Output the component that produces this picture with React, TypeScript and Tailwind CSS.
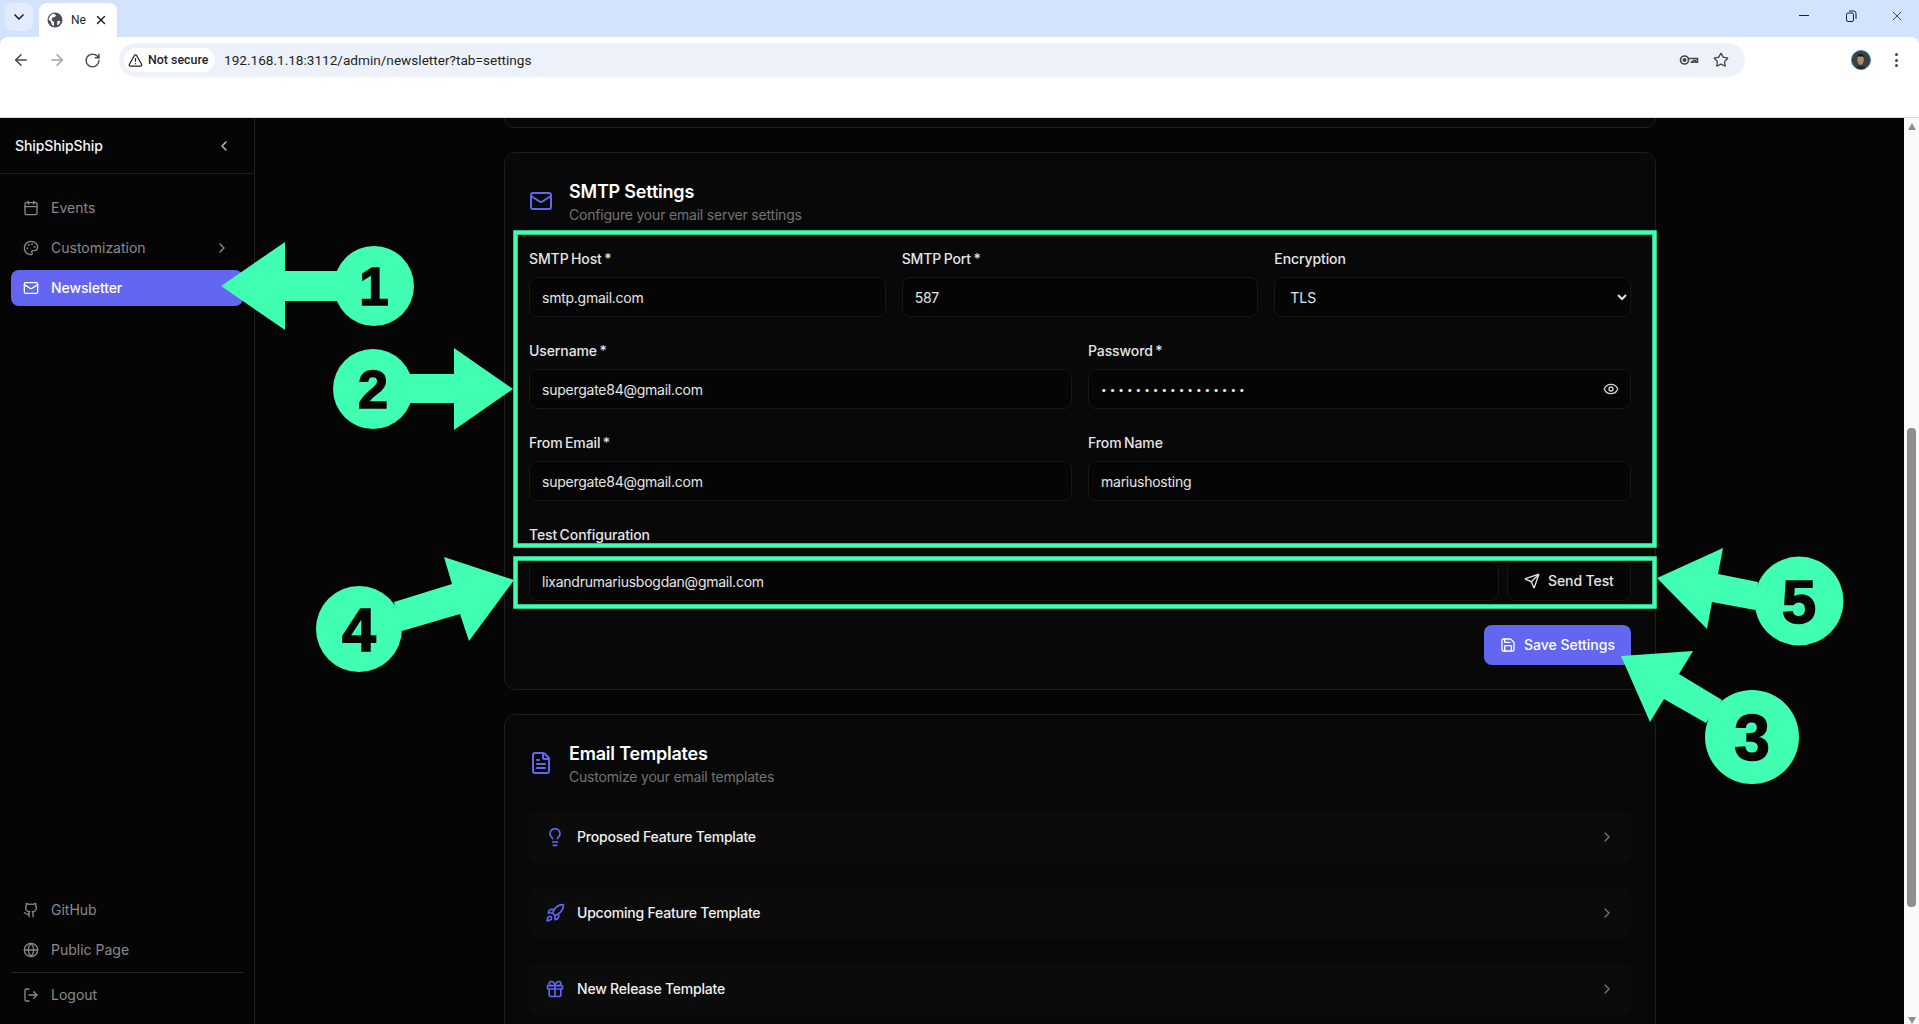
import {
  ArrowLeft,
  ArrowRight,
  Calendar,
  ChevronDown,
  ChevronLeft,
  ChevronRight,
  Eye,
  FileText,
  Gift,
  Github,
  Globe,
  Lightbulb,
  LogOut,
  Mail,
  Palette,
  RotateCw,
  Rocket,
  Save,
  Send,
  Star,
  TriangleAlert,
  X,
} from "lucide-react";

const inputClass =
  "w-full h-10 rounded-lg border border-[#171717] bg-[#050505] px-3 text-sm tracking-[-0.25px] text-[#e5e5e5] outline-none";

const labelClass = "block text-sm font-medium leading-5 tracking-[-0.1px] [word-spacing:-1.2px] text-[#e5e5e5]";

function Field({ label, value, type = "text" }: { label: string; value: string; type?: string }) {
  return (
    <div>
      <label className={labelClass + " mb-2"}>{label}</label>
      <input readOnly type={type} value={value} className={inputClass} />
    </div>
  );
}

function BrowserChrome() {
  return (
    <div className="h-[118px] shrink-0 bg-[#d3e3fd] font-['Roboto',sans-serif]">
      {/* Tab strip */}
      <div className="flex h-[37px] items-end pl-[5px]">
        <div className="mb-[6px] flex h-[28px] w-[28px] items-center justify-center rounded-lg bg-[#e3ecfc]">
          <ChevronDown className="h-4 w-4 text-[#1f1f1f]" strokeWidth={2.5} />
        </div>
        <div className="ml-[6px] flex h-[34px] w-[78px] items-center rounded-t-lg bg-white pl-[8px]">
          <svg viewBox="0 0 16 16" className="h-[16px] w-[16px] shrink-0">
            <circle cx="8" cy="8" r="7.5" fill="#4a4d51" />
            <path d="M6 1.5 9 3 8 5 5.5 5.5 4.5 8 7 10 7 14 5 13 3.5 9 1.5 7.5 3 4Z" fill="#fff" />
            <path d="M10.5 9h3l-1.5 3.5-2 .5Z" fill="#fff" />
          </svg>
          <span className="ml-[8px] w-[14px] whitespace-nowrap text-xs text-[#1f1f1f]">Ne</span>
          <X className="ml-[9px] h-[14px] w-[14px] text-[#1f1f1f]" strokeWidth={2.5} />
        </div>
        <div className="ml-auto flex h-full w-[136px] items-start pt-[8px] text-[#1f1f1f]">
          <div className="flex w-[46px] justify-center pr-[4px] pt-[7px]">
            <div className="h-[1px] w-[10px] bg-[#1f1f1f]" />
          </div>
          <div className="flex w-[46px] justify-center pr-[2px] pt-[2px]">
            <svg viewBox="0 0 12 12" className="h-[12px] w-[12px]" fill="none" stroke="#1f1f1f">
              <rect x="1.5" y="3" width="7" height="8.5" rx="1.5" />
              <path d="M4 1h4.5A2.5 2.5 0 0 1 11 3.5V9" />
            </svg>
          </div>
          <div className="flex w-[44px] justify-center">
            <X className="h-[16px] w-[16px]" strokeWidth={1.2} />
          </div>
        </div>
      </div>
      {/* Toolbar */}
      <div className="flex h-[81px] flex-col rounded-t-lg border-b border-[#d9d9d9] bg-white">
        <div className="flex h-[46px] items-center">
          <div className="flex w-[119px] items-center pl-[12px] text-[#444746]">
            <ArrowLeft className="h-[18px] w-[18px]" />
            <ArrowRight className="ml-[18px] h-[18px] w-[18px] text-[#a0a3a6]" />
            <RotateCw className="ml-[18px] h-[17px] w-[17px]" />
          </div>
          <div className="flex h-[34px] w-[1626px] items-center rounded-full bg-[#edf2fa] pl-[5px] pr-[16px]">
            <div className="flex h-[24px] w-[91px] items-center rounded-full bg-white pl-[4px] text-[12.4px] font-medium text-[#1f1f1f]">
              <TriangleAlert className="h-[15px] w-[15px]" />
              <span className="ml-[5px] whitespace-nowrap">Not secure</span>
            </div>
            <span className="ml-[9px] text-[13.6px] text-[#1f1f1f]">192.168.1.18:3112/admin/newsletter?tab=settings</span>
            <svg viewBox="0 0 20 12" className="ml-auto mr-[-1px] h-[12px] w-[20px]" fill="none" stroke="#444746" strokeWidth="1.6">
              <circle cx="5.5" cy="6" r="4" />
              <circle cx="5.5" cy="6" r="1.2" fill="#444746" />
              <path d="M9.5 4.5h9v3.8h-2V6.6h-2v1.7h-2V7" />
            </svg>
            <Star className="ml-[15px] h-[16px] w-[16px] text-[#444746]" />
          </div>
          <div className="ml-[106px] h-[20px] w-[20px] overflow-hidden rounded-full border border-[#3b82c4] bg-[#3c3f3a]">
            <svg viewBox="0 0 20 20" className="h-full w-full">
              <ellipse cx="9.5" cy="9.5" rx="3.6" ry="6" fill="#a98b73" />
              <path d="M5.5 7c0-5 8-5 8 0l-1-1H7Z" fill="#1d1b19" />
              <path d="M3 20c1-4 12-4 13 0Z" fill="#202020" />
            </svg>
          </div>
          <div className="ml-[24px] flex flex-col gap-[2.5px]">
            <div className="h-[3px] w-[3px] rounded-full bg-[#444746]" />
            <div className="h-[3px] w-[3px] rounded-full bg-[#444746]" />
            <div className="h-[3px] w-[3px] rounded-full bg-[#444746]" />
          </div>
        </div>
      </div>
    </div>
  );
}

function SidebarItem({ icon: Icon, label, trailing }: { icon: typeof Mail; label: string; trailing?: boolean }) {
  return (
    <div className="flex h-9 items-center gap-3 rounded-lg pl-3 pr-[13px] text-sm text-[#8a8a8a]">
      <Icon className="h-4 w-4 shrink-0" />
      <span>{label}</span>
      {trailing && <ChevronRight className="ml-auto h-4 w-4" />}
    </div>
  );
}

function Sidebar() {
  return (
    <aside className="flex w-[255px] shrink-0 flex-col border-r border-[#1f1f1f] bg-[#050505]">
      <div className="flex h-[56px] shrink-0 items-center justify-between border-b border-[#1f1f1f] pl-[15px] pr-[22px]">
        <span className="text-sm font-medium tracking-[-0.1px] text-[#f5f5f5]">ShipShipShip</span>
        <ChevronLeft className="h-4 w-4 text-[#c4c4c4]" />
      </div>
      <nav className="flex flex-col gap-1 px-[11px] pt-4">
        <SidebarItem icon={Calendar} label="Events" />
        <SidebarItem icon={Palette} label="Customization" trailing />
        <div className="flex h-9 items-center gap-3 rounded-lg bg-[#6366f1] pl-3 text-sm font-medium tracking-[-0.1px] text-white">
          <Mail className="h-4 w-4" />
          <span>Newsletter</span>
        </div>
      </nav>
      <div className="mt-auto px-[11px] pb-[11px]">
        <div className="flex flex-col gap-1">
          <SidebarItem icon={Github} label="GitHub" />
          <SidebarItem icon={Globe} label="Public Page" />
        </div>
        <div className="mt-1 border-t border-[#262626] pt-1">
          <SidebarItem icon={LogOut} label="Logout" />
        </div>
      </div>
    </aside>
  );
}

function CardHeader({ icon: Icon, title, subtitle }: { icon: typeof Mail; title: string; subtitle: string }) {
  return (
    <div className="mb-6 flex items-center gap-4">
      <Icon className="h-6 w-6 text-[#6366f1]" />
      <div>
        <h2 className="pt-[1px] text-lg font-semibold leading-[27px] tracking-[-0.2px] text-white">{title}</h2>
        <p className="text-sm leading-5 tracking-[-0.2px] text-[#737373]">{subtitle}</p>
      </div>
    </div>
  );
}

function TemplateRow({ icon: Icon, label }: { icon: typeof Mail; label: string }) {
  return (
    <div className="flex h-[52px] items-center gap-3 rounded-lg bg-[#0b0b0b] px-4">
      <Icon className="h-5 w-5 text-[#6366f1]" />
      <span className="text-sm font-medium tracking-[-0.2px] text-[#f0f0f0]">{label}</span>
      <ChevronRight className="ml-auto h-4 w-4 text-[#737373]" />
    </div>
  );
}

function Main() {
  return (
    <main className="min-w-0 flex-1 overflow-hidden bg-[#050505] pl-[249px]">
      <div className="w-[1152px]">
        {/* End of the card above, scrolled out of view */}
        <div className="mb-6 h-[10px] rounded-b-xl border border-t-0 border-[#1f1f1f] bg-[#080808]" />

        <section className="mb-6 rounded-xl border border-[#1f1f1f] bg-[#080808] p-6">
          <CardHeader icon={Mail} title="SMTP Settings" subtitle="Configure your email server settings" />
          <div className="grid grid-cols-3 gap-4">
            <Field label="SMTP Host *" value="smtp.gmail.com" />
            <Field label="SMTP Port *" value="587" />
            <div>
              <label className={labelClass + " mb-2"}>Encryption</label>
              <select className="h-10 w-full rounded-lg border border-[#171717] bg-[#050505] pl-[11px] pr-3 text-sm text-[#e5e5e5] outline-none [color-scheme:dark]">
                <option>TLS</option>
              </select>
            </div>
          </div>
          <div className="mt-6 grid grid-cols-2 gap-4">
            <Field label="Username *" value="supergate84@gmail.com" />
            <div>
              <label className={labelClass + " mb-2"}>Password *</label>
              <div className="relative">
                <input
                  readOnly
                  type="password"
                  value="aaaaaaaaaaaaaaaaa"
                  className="h-10 w-full rounded-lg border border-[#171717] bg-[#050505] px-3 text-[10px] tracking-[3px] text-[#e5e5e5] outline-none"
                />
                <Eye className="absolute right-[12px] top-3 h-4 w-4 text-[#d4d4d4]" />
              </div>
            </div>
          </div>
          <div className="mt-6 grid grid-cols-2 gap-4">
            <Field label="From Email *" value="supergate84@gmail.com" />
            <Field label="From Name" value="mariushosting" />
          </div>
          <div className="mt-6">
            <label className={labelClass + " mb-4"}>Test Configuration</label>
            <div className="flex gap-2">
              <input readOnly value="lixandrumariusbogdan@gmail.com" className={inputClass + " min-w-0 flex-1"} />
              <button className="flex h-10 w-[124px] shrink-0 items-center gap-2 rounded-lg border border-[#171717] bg-[#050505] pl-4 text-sm font-medium tracking-[-0.1px] text-[#e5e5e5]">
                <Send className="h-4 w-4" />
                Send Test
              </button>
            </div>
          </div>
          <div className="mt-6 flex justify-end">
            <button className="flex h-10 items-center gap-2 rounded-lg bg-[#6366f1] px-4 text-sm font-medium text-white">
              <Save className="h-4 w-4" />
              Save Settings
            </button>
          </div>
        </section>

        <section className="rounded-xl border border-[#1f1f1f] bg-[#080808] p-6">
          <CardHeader icon={FileText} title="Email Templates" subtitle="Customize your email templates" />
          <div className="flex flex-col gap-6">
            <TemplateRow icon={Lightbulb} label="Proposed Feature Template" />
            <TemplateRow icon={Rocket} label="Upcoming Feature Template" />
            <TemplateRow icon={Gift} label="New Release Template" />
          </div>
        </section>
      </div>
    </main>
  );
}

function Scrollbar() {
  return (
    <div className="flex w-[15px] shrink-0 flex-col items-center bg-[#f8f9fb]">
      <div className="mt-[5px] h-0 w-0 border-x-[4.5px] border-b-[7px] border-x-transparent border-b-[#8f8f8f]" />
      <div className="mt-[298px] h-[480px] w-[9px] rounded-[4px] bg-[#8f8f8f]" />
      <div className="mt-[110px] h-0 w-0 border-x-[4.5px] border-t-[7px] border-x-transparent border-t-[#8f8f8f]" />
    </div>
  );
}

// Tutorial markup drawn on top of the screenshot
const GREEN = "#40ffb2";

function Callout({ cx, cy, r, digit, size, points }: { cx: number; cy: number; r: number; digit: string; size: number; points: string }) {
  return (
    <g>
      <polygon points={points} fill={GREEN} />
      <circle cx={cx} cy={cy} r={r} fill={GREEN} />
      <text
        x={cx}
        y={cy + size * 0.36}
        textAnchor="middle"
        fontFamily="'Liberation Sans', sans-serif"
        fontWeight="700"
        fontSize={size}
        fill="#050505"
        stroke="#050505"
        strokeWidth="1.5"
      >
        {digit}
      </text>
    </g>
  );
}

function Annotations() {
  return (
    <svg className="pointer-events-none absolute left-0 top-0" width="1919" height="1024" viewBox="0 0 1919 1024">
      <rect x="515.5" y="232.5" width="1139" height="313" fill="none" stroke={GREEN} strokeWidth="4.5" />
      <rect x="515.5" y="558.5" width="1139" height="48" fill="none" stroke={GREEN} strokeWidth="4.5" />
      <Callout cx={374} cy={286} r={40} digit="1" size={53} points="221,286 285,242 285,271 350,271 350,301 285,301 285,330" />
      <Callout cx={373} cy={389} r={40} digit="2" size={54} points="513,389 454,348 454,374 400,374 400,403 454,403 454,430" />
      <Callout cx={1752} cy={737} r={47} digit="3" size={64} points="1621,656 1693,651 1679,674 1722,700 1706,723 1664,699 1650,722" />
      <Callout cx={359} cy={629} r={43} digit="4" size={61} points="514,580 444,557 452,584 394,602 402,631 460,614 469,641" />
      <Callout cx={1799} cy={601} r={44.5} digit="5" size={62} points="1657,578 1723,548 1718,574 1758,582 1755,610 1712,602 1707,629" />
    </svg>
  );
}

export default function App() {
  return (
    <div className="relative flex h-[1024px] w-[1919px] flex-col overflow-hidden bg-[#050505] font-['Inter',sans-serif]">
      <BrowserChrome />
      <div className="flex min-h-0 flex-1">
        <Sidebar />
        <Main />
        <Scrollbar />
      </div>
      <Annotations />
    </div>
  );
}
